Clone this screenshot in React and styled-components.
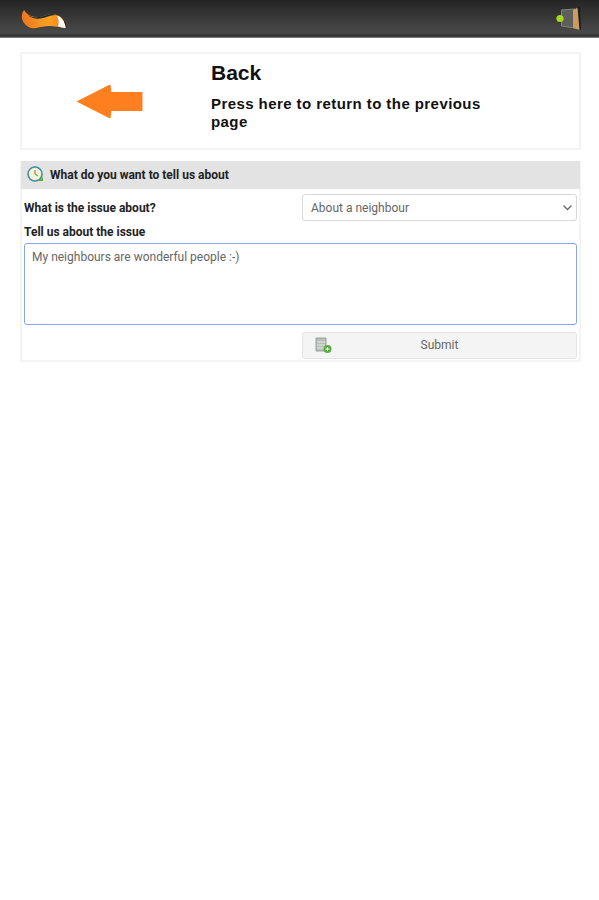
import React from 'react'
import styled, { createGlobalStyle } from 'styled-components'

const Global = createGlobalStyle`
html, body {
  margin: 0;
  padding: 0;
  background: #fff;
}
* {
  box-sizing: border-box;
}
`
const Page = styled.div`
width: 599px;
height: 900px;
background: #fff;
font-family: Roboto, "Liberation Sans", sans-serif;
`
const Header = styled.header`
height: 38px;
display: flex;
align-items: center;
justify-content: space-between;
padding: 0 17px 0 21px;
background: linear-gradient(#242424, #4a4a4a 88%, #333 92%, #3a3a3a 96%, #9a9a9a);
`
const Content = styled.main`
padding: 14px 18px 0 20px;
display: flex;
flex-direction: column;
gap: 11px;
`
const BackCard = styled.div`
height: 98px;
display: flex;
border: 2px solid #f4f4f4;
`
const ArrowCell = styled.div`
width: 189px;
display: flex;
align-items: center;
justify-content: center;
padding: 0 13px 0 0;
`
const BackText = styled.div`
flex: 1;
padding: 7px 90px 0 0;
font-family: "Liberation Sans", Arial, sans-serif;
font-weight: bold;
color: #111;
`
const BackTitle = styled.div`
font-size: 21px;
line-height: 24px;
margin-bottom: 10px;
`
const BackSub = styled.div`
font-size: 15px;
line-height: 18px;
letter-spacing: 0.43px;
`
const Panel = styled.section`
border: 2px solid #f4f4f4;
border-top: 0;
height: 201px;
`
const PanelHead = styled.div`
height: 28px;
margin: 0 -1px;
padding: 0 0 1px 6px;
display: flex;
align-items: center;
gap: 6px;
background: #e3e3e3;
font-size: 12px;
font-weight: bold;
color: #222;
`
const Row = styled.div`
display: flex;
align-items: center;
justify-content: space-between;
padding: 5px 2px 0 2px;
`
const Label = styled.label`
font-size: 12px;
font-weight: bold;
color: #222;
`
const Select = styled.div`
width: 275px;
height: 27px;
padding: 0 3px 0 8px;
display: flex;
align-items: center;
justify-content: space-between;
border: 1px solid #d8d8d8;
border-radius: 3px;
background: #fff;
font-size: 12px;
color: #666;
`
const IssueLabel = styled(Label)`
display: block;
padding: 4px 0 0 2px;
line-height: 14px;
`
const TextArea = styled.div`
margin: 4px 2px 0 2px;
height: 82px;
padding: 6px 7px;
border: 1.5px solid #8aa5ec;
border-radius: 3px;
font-size: 12px;
line-height: 14px;
color: #666;
`
const SubmitRow = styled.div`
display: flex;
justify-content: flex-end;
padding: 7px 2px 0 0;
`
const Submit = styled.div`
position: relative;
width: 275px;
height: 27px;
padding-bottom: 1px;
display: flex;
align-items: center;
justify-content: center;
border: 1px solid #e4e4e4;
border-radius: 3px;
background: #f4f4f4;
font-size: 12px;
color: #666;
`
const SubmitIcon = styled.svg`
position: absolute;
left: 12px;
top: 4px;
`

const App = () => {
  return (
    <Page>
      <Global />
      <Header>
        <svg width="46" height="22" viewBox="0 0 46 22">
          <defs>
            <linearGradient id="tail" x1="0" y1="0" x2="1" y2="0">
              <stop offset="0" stopColor="#ee7420" />
              <stop offset="0.6" stopColor="#f9a11f" />
              <stop offset="1" stopColor="#f47b20" />
            </linearGradient>
          </defs>
          <path d="M3 2 C0 6 0 11 3 15 C6 19 10 21 15 20 C20 19 24 18 28 18 C33 18 38 19 45 20 C44 14 42 10 38 8 C34 6 30 5 26 7 C21 9 15 10 10 8 C7 7 5 5 3 2Z" fill="url(#tail)" />
          <path d="M36 8 C40 8 44 14 45 20 C42 20 39 19 37 18 C38 15 38 11 36 8Z" fill="#fff" />
          <path d="M42 10 C44 13 45 17 46 21 L45 20 C44 16 43 13 42 10Z" fill="#222" />
          <path d="M7 7 C13 11 20 9 26 7 C29 5.500 32 5.500 35 7 C31 7 28 8 24 9.500 C18 11.500 11 11 7 7Z" fill="#1d2a3a" />
        </svg>
        <svg width="26" height="26" viewBox="0 0 26 26">
          <path d="M5.500 4 L19 3 L19 22 L5.500 20Z" fill="#5e5e5a" stroke="#85857f" strokeWidth="1" />
          <path d="M17 4 L22 1.500 L24 24 L17 22Z" fill="#cb9c60" />
          <path d="M21.500 1 L24 1 L25 24 L23.500 24Z" fill="#1e1e1e" />
          <circle cx="4" cy="12.500" r="3.600" fill="#a6d81e" />
        </svg>
      </Header>
      <Content>
        <BackCard>
          <ArrowCell>
            <svg width="66" height="35" viewBox="0 0 66 35">
              <path d="M0.500 17.500 L33 1 L34 8.500 L65 8.500 L65 26.500 L34 26.500 L33 34Z" fill="#fd7f20" stroke="#fd7f20" strokeLinejoin="round" />
            </svg>
          </ArrowCell>
          <BackText>
            <BackTitle>Back</BackTitle>
            <BackSub>Press here to return to the previous page</BackSub>
          </BackText>
        </BackCard>
        <Panel>
          <PanelHead>
            <svg width="17" height="17" viewBox="0 0 17 17">
              <circle cx="8" cy="8" r="7" fill="#f3f1d8" stroke="#3f8fa8" strokeWidth="1.600" />
              <path d="M8 4 L8 8 L11 10" fill="none" stroke="#8a9a50" strokeWidth="1.200" />
              <path d="M11 15 L16 15 L16 11Z" fill="#67b02f" />
            </svg>
            What do you want to tell us about
          </PanelHead>
          <Row>
            <Label>What is the issue about?</Label>
            <Select>
              About a neighbour
              <svg width="11" height="11" viewBox="0 0 11 11">
                <path d="M1.500 3.500 L5.500 7.500 L9.500 3.500" fill="none" stroke="#666" strokeWidth="1.300" />
              </svg>
            </Select>
          </Row>
          <IssueLabel>Tell us about the issue</IssueLabel>
          <TextArea>My neighbours are wonderful people :-)</TextArea>
          <SubmitRow>
            <Submit>
              <SubmitIcon width="18" height="17" viewBox="0 0 18 17">
                <path d="M1 1 H11 V14 H1Z" fill="#b9bdb9" stroke="#9ba09b" />
                <path d="M2 5 H10 M2 8 H10 M2 11 H10" stroke="#e8e8e8" strokeWidth="1" />
                <circle cx="12.500" cy="12" r="4" fill="#58ad3a" />
                <path d="M12.500 10 V14 M10.500 12 H14.500" stroke="#fff" strokeWidth="1" />
              </SubmitIcon>
              Submit
            </Submit>
          </SubmitRow>
        </Panel>
      </Content>
    </Page>
  )
}

export default App
